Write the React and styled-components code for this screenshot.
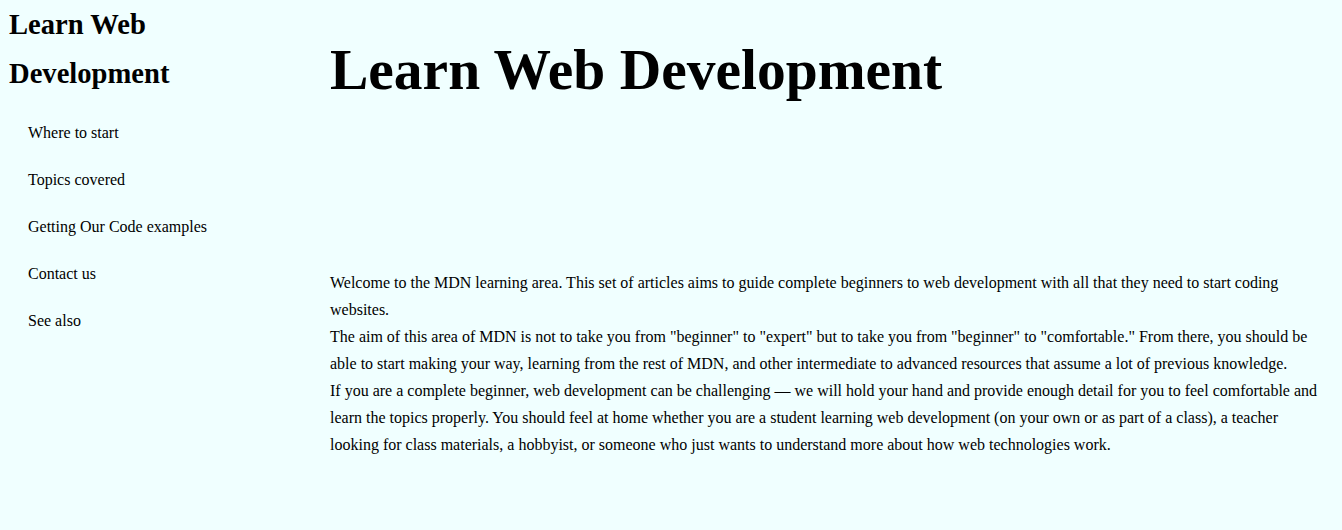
import React from "react";
import styled, { createGlobalStyle } from "styled-components";

const GlobalStyle = createGlobalStyle`
  html, body {
    margin: 0;
    padding: 0;
    background-color: #f0ffff;
  }

  body {
    font-family: "Liberation Serif", "Times New Roman", serif;
    color: #000;
  }
`;

const Page = styled.div`
  display: grid;
  grid-template-columns: 330px 1fr;
  min-height: 530px;
  background-color: #f0ffff;
`;

const Sidebar = styled.nav`
  padding: 0 0 0 9px;
`;

const SideTitle = styled.h2`
  margin: 0;
  font-size: 28.6px;
  line-height: 49px;
  font-weight: bold;
`;

const NavList = styled.ul`
  list-style: none;
  margin: 25px 0 0;
  padding: 0 0 0 19px;
`;

const NavItem = styled.li`
  font-size: 16px;
  line-height: 20px;
  margin-bottom: 27px;
`;

const Main = styled.main`
  padding: 0 20px 0 0;
`;

const Heading = styled.h1`
  margin: 0;
  padding-top: 30px;
  height: 239px;
  font-size: 57.5px;
  line-height: 80px;
  font-weight: bold;
`;

const Para = styled.p`
  margin: 0;
  font-size: 16px;
  line-height: 27px;
`;

const links = [
  "Where to start",
  "Topics covered",
  "Getting Our Code examples",
  "Contact us",
  "See also",
];

export default function App() {
  return (
    <>
      <GlobalStyle />
      <Page>
        <Sidebar>
          <SideTitle>
            Learn Web
            <br />
            Development
          </SideTitle>
          <NavList>
            {links.map(item => (
              <NavItem key={item}>{item}</NavItem>
            ))}
          </NavList>
        </Sidebar>
        <Main>
          <Heading>Learn Web Development</Heading>
          <Para>
            Welcome to the MDN learning area. This set of articles aims to guide
            complete beginners to web development with all that they need to start
            coding websites.
          </Para>
          <Para>
            The aim of this area of MDN is not to take you from "beginner" to
            "expert" but to take you from "beginner" to "comfortable." From there,
            you should be able to start making your way, learning from the rest of
            MDN, and other intermediate to advanced resources that assume a lot of
            previous knowledge.
          </Para>
          <Para>
            If you are a complete beginner, web development can be challenging —
            we will hold your hand and provide enough detail for you to feel
            comfortable and learn the topics properly. You should feel at home
            whether you are a student learning web development (on your own or as
            part of a class), a teacher looking for class materials, a hobbyist, or
            someone who just wants to understand more about how web technologies
            work.
          </Para>
        </Main>
      </Page>
    </>
  );
}
